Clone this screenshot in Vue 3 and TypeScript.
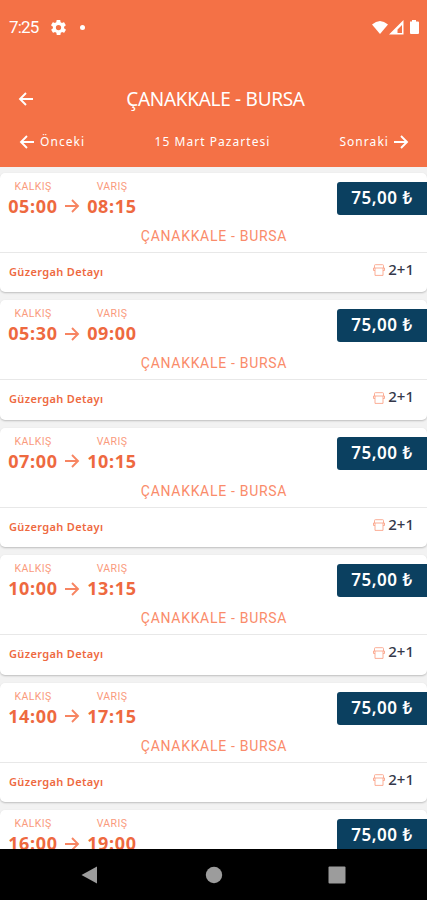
<script setup lang="ts">
interface Trip {
  departure: string
  arrival: string
  price: string
  seats: string
}

const route = 'ÇANAKKALE - BURSA'
const times: [string, string][] = [
  ['05:00', '08:15'],
  ['05:30', '09:00'],
  ['07:00', '10:15'],
  ['10:00', '13:15'],
  ['14:00', '17:15'],
  ['16:00', '19:00'],
]
const trips: Trip[] = times.map(([departure, arrival]) => ({
  departure,
  arrival,
  price: '75,00 ₺',
  seats: '2+1',
}))
</script>

<template>
  <div class="screen">
    <header class="header">
      <div class="status">
        <span class="clock">7:25</span>
        <svg class="gear" viewBox="2 2 20 20">
          <path fill="#fff" fill-rule="evenodd" d="M19.4 13c.1-.6.1-1.400 0-2l2.100-1.600c.2-.2.3-.4.1-.7l-2-3.400c-.1-.2-.4-.3-.6-.2l-2.500 1a7 7 0 0 0-1.700-1l-.4-2.600c0-.3-.2-.5-.5-.5h-4c-.2 0-.4.2-.5.500l-.4 2.600a7 7 0 0 0-1.700 1l-2.500-1c-.2-.1-.5 0-.6.2l-2 3.400c-.1.2-.1.5.1.700L4.600 11c-.1.600-.1 1.400 0 2l-2.100 1.600c-.2.200-.2.400-.1.700l2 3.400c.1.200.4.300.6.200l2.500-1a7 7 0 0 0 1.700 1l.4 2.600c0 .3.200.5.500.5h4c.2 0 .4-.2.500-.5l.4-2.600a7 7 0 0 0 1.700-1l2.500 1c.2.100.5 0 .6-.2l2-3.400c.1-.2.1-.5-.1-.7zM12 15.500a3.500 3.500 0 1 1 0-7 3.500 3.500 0 0 1 0 7z" />
        </svg>
        <span class="dot"></span>
        <svg class="signals" viewBox="0 0 50 16">
          <path fill="#fff" d="M1 4.500Q9-2.500 17 4.500L9 14z" />
          <path fill="#fff" fill-rule="evenodd" d="M18 14.500 32.500 0V14.500zM26.500 13h4.500V5l-4.500 4.500z" />
          <path fill="#fff" d="M39 1.500h2V0h4v1.500h2q1 0 1 1V13q0 1-1 1h-7q-1 0-1-1V2.500z" />
        </svg>
      </div>
      <div class="titlebar">
        <svg class="back" viewBox="0 0 16 16"><path d="M15 8H2M8 2 2 8l6 6" /></svg>
        <h1>{{ route }}</h1>
      </div>
      <nav class="days">
        <a class="prev">
          <svg class="day-arrow" viewBox="0 0 16 16"><path d="M15 8H2M8 2 2 8l6 6" /></svg>
          <span>Önceki</span>
        </a>
        <span class="date">15 Mart Pazartesi</span>
        <a class="next">
          <span>Sonraki</span>
          <svg class="day-arrow" viewBox="0 0 16 16"><path d="M1 8h13M8 2l6 6-6 6" /></svg>
        </a>
      </nav>
    </header>

    <main class="list">
      <article v-for="trip in trips" :key="trip.departure" class="card">
        <div class="summary">
          <div class="schedule">
            <div class="stop">
              <span class="label">KALKIŞ</span>
              <b>{{ trip.departure }}</b>
            </div>
            <svg class="time-arrow" viewBox="0 0 16 16"><path d="M1 8h13M8 2l6 6-6 6" /></svg>
            <div class="stop">
              <span class="label">VARIŞ</span>
              <b>{{ trip.arrival }}</b>
            </div>
            <button class="price">{{ trip.price }}</button>
          </div>
          <div class="route">{{ route }}</div>
        </div>
        <div class="details">
          <span class="link">Güzergah Detayı</span>
          <span class="seats">
            <svg class="seat" viewBox="0 0 12 12">
              <path d="M1.500 4V1.500q0-.8.800-.8h7.400q.8 0 .8.800V4M.5 4h11M2 4v7.400h8V4M.5 4v2.500H2M11.500 4v2.500H10" />
            </svg>
            {{ trip.seats }}
          </span>
        </div>
      </article>
    </main>

    <footer class="navbar">
      <svg class="nav-icon" viewBox="0 0 18 18"><path d="M16 .5v17L.5 9z" /></svg>
      <svg class="nav-icon" viewBox="0 0 18 18"><circle cx="9" cy="9" r="8.200" /></svg>
      <svg class="nav-icon" viewBox="0 0 18 18"><rect x=".5" y=".5" width="17" height="17" rx="1" /></svg>
    </footer>
  </div>
</template>

<style>
body {
  margin: 0;
}
</style>

<style scoped>
.screen {
  width: 427px;
  height: 900px;
  display: flex;
  flex-direction: column;
  overflow: hidden;
  background: #f2f2f2;
  font-family: 'Noto Sans', sans-serif;
}
.header {
  flex: none;
  height: 167px;
  background: #f47146;
  color: #fff;
  box-sizing: border-box;
  padding-top: 16px;
}
.status {
  height: 23px;
  display: flex;
  align-items: center;
  padding: 0 6px 0 9px;
}
.clock {
  width: 42px;
  font: 17px/23px Roboto, sans-serif;
  letter-spacing: -0.8px;
}
.gear {
  width: 15px;
  height: 15px;
}
.dot {
  width: 5px;
  height: 5px;
  margin-left: 14px;
  border-radius: 50%;
  background: #fff;
}
.signals {
  width: 50px;
  height: 16px;
  margin-left: auto;
}
.titlebar {
  height: 37px;
  margin-top: 41px;
  display: grid;
  grid-template-columns: 46px 1fr 42px;
  align-items: center;
}
.back {
  width: 16px;
  height: 16px;
  margin-left: 18px;
}
h1 {
  margin: 0;
  text-align: center;
  font-size: 19px;
  font-weight: 400;
  line-height: 24px;
  letter-spacing: -0.3px;
  white-space: nowrap;
}
svg.back,
svg.day-arrow,
svg.time-arrow {
  fill: none;
  stroke: currentColor;
  stroke-width: 1.9;
}
.days {
  display: grid;
  grid-template-columns: 100px 1fr 103px;
  align-items: center;
  height: 20px;
  margin-top: 15px;
  padding: 0 18px 0 19px;
  font-size: 12px;
  line-height: 18px;
  letter-spacing: 1.05px;
}
.prev,
.next {
  display: flex;
  align-items: center;
  gap: 5px;
}
.next {
  justify-content: flex-end;
  gap: 4px;
}
.date {
  text-align: center;
}
.day-arrow {
  width: 16px;
  height: 16px;
}
.list {
  flex: 1;
  min-height: 0;
  overflow: hidden;
  display: flex;
  flex-direction: column;
  gap: 8px;
  padding-top: 5.9px;
}
.card {
  flex: none;
  height: 119.5px;
  border-radius: 5px;
  background: #fff;
  box-shadow: 0 1px 2px rgba(0, 0, 0, 0.22);
  color: #ee693f;
}
.summary {
  height: 79px;
  border-bottom: 1px solid #e8e8e8;
}
.schedule {
  display: flex;
  height: 52px;
  padding: 7px 0 0 8px;
  box-sizing: border-box;
}
.stop {
  display: flex;
  flex-direction: column;
  align-items: center;
  width: 50px;
}
.label {
  height: 13px;
  font: 10.5px/13px Roboto, sans-serif;
  letter-spacing: 0.4px;
  color: #fa9a7c;
}
.stop b {
  font-size: 18px;
  font-weight: 700;
  line-height: 26px;
  letter-spacing: 0.7px;
}
.time-arrow {
  width: 16px;
  height: 16px;
  margin: 18.5px 7px 0 6px;
  color: #f78562;
}
.price {
  width: 90px;
  height: 33px;
  margin: 2px 0 0 auto;
  padding: 0 0 1px;
  border: 0;
  border-radius: 3px 0 0 3px;
  background: #0b4060;
  color: #fff;
  font: 600 17px/28px 'Noto Sans', sans-serif;
  letter-spacing: 0.5px;
}
.route {
  height: 22px;
  padding-left: 1px;
  text-align: center;
  font: 14px/22px Roboto, sans-serif;
  letter-spacing: 0.7px;
  color: #fa8b6a;
}
.details {
  height: 37px;
  display: flex;
  justify-content: space-between;
  align-items: center;
  padding: 0 13px 0 9px;
}
.link {
  font-size: 11px;
  font-weight: 600;
  letter-spacing: 0.35px;
}
.seats {
  display: flex;
  align-items: center;
  gap: 3px;
  color: #35384a;
  font-size: 15px;
  font-weight: 500;
  line-height: 20px;
  margin-bottom: 5px;
}
.seat {
  width: 12px;
  height: 12px;
  margin-top: 3px;
  fill: none;
  stroke: #fba58b;
  stroke-width: 0.9;
}
.navbar {
  flex: none;
  height: 51px;
  display: flex;
  align-items: center;
  justify-content: space-between;
  padding: 0 81px;
  background: #000;
}
.nav-icon {
  width: 18px;
  height: 18px;
  fill: #9c9c9c;
}
</style>
